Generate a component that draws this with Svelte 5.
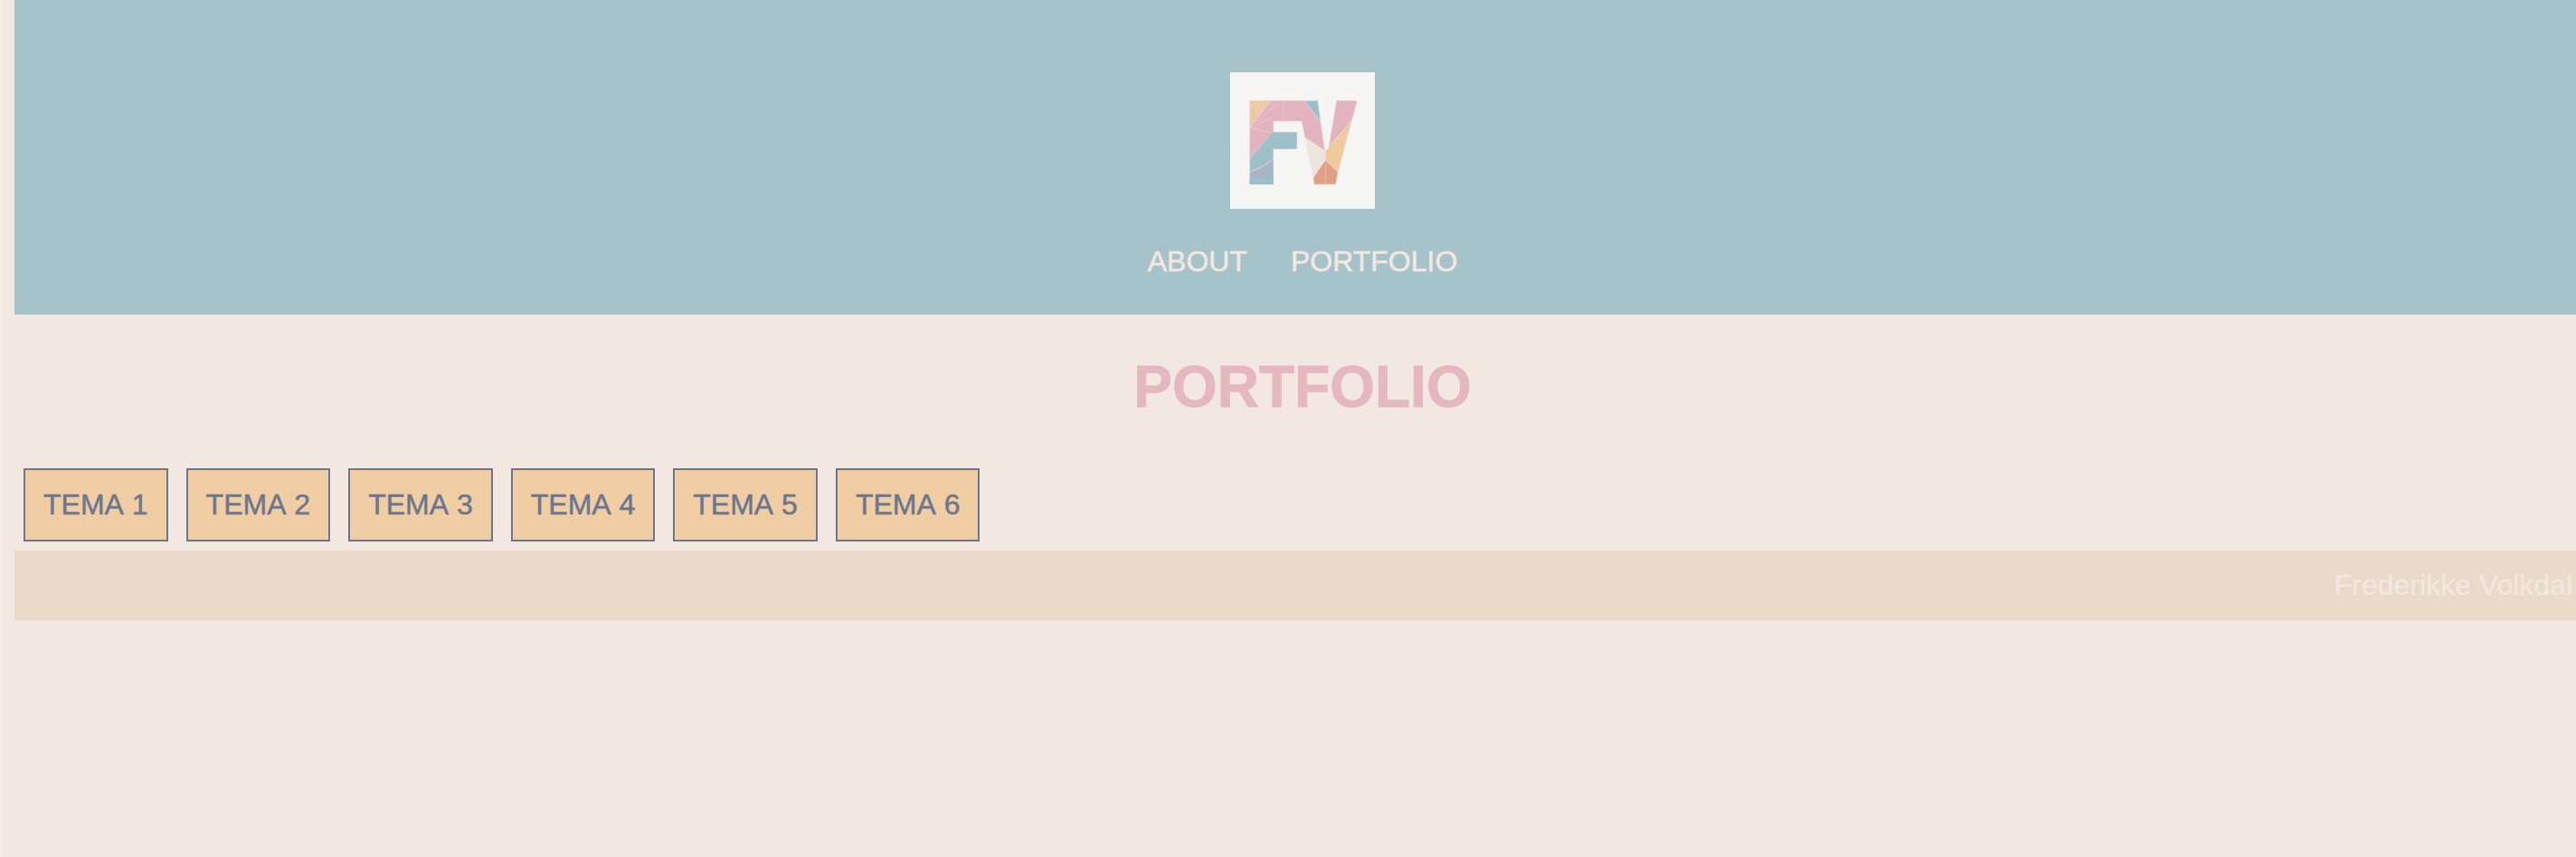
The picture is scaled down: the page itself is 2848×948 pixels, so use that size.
<script>
  const links = ['ABOUT', 'PORTFOLIO'];
  const themes = [1, 2, 3, 4, 5, 6];
</script>

<div class="page">
  <header>
    <svg class="logo" viewBox="0 0 480 453" preserveAspectRatio="none" role="img" aria-label="FV">
      <rect width="480" height="453" fill="#f5f5f3" />
      <g stroke="#eddfe2" stroke-width="1.5" stroke-linejoin="round">
        <path d="M65 94H135L65 183Z" fill="#eec8a0" />
        <path d="M135 94H246L300 163L314 260L248 216L237 162H144V200L65 288V183Z" fill="#e3b3bf" />
        <path d="M246 94H291L300 163Z" fill="#9bc0c8" />
        <path d="M144 198H222V255H144V287Q112 315 65 331V288L136 201Z" fill="#9fc0c8" />
        <path d="M144 287V372H65V331Q112 315 144 287Z" fill="#a8b5c6" />
        <path d="M248 216L314 260L316 291L276 350Z" fill="#eee4df" />
        <path d="M353 94H422L403 161L327 248Z" fill="#e3b3bf" />
        <path d="M403 161L358 332L316 291V262Z" fill="#f0c99c" />
        <path d="M316 291L358 332L350 372H279L276 350Z" fill="#df9f88" />
      </g>
      <path d="M65 351L77 347L91 351L104 344L122 349L144 339V372H65Z" fill="#9dbdc7" />
      <g fill="none" stroke="#efd8db" stroke-width="1.5">
        <path d="M65 101L98 140M77 94L107 131M65 183L136 201M65 183L135 152M87 163L170 95M178 94V162M317 292V372" />
      </g>
      <g fill="none" stroke="#c9a5b3" stroke-width="1" stroke-dasharray="2 9">
        <path d="M105 150L165 105M150 110L145 155M190 110L223 150M198 101L240 138M86 225L120 200M88 240L110 222M370 112L402 136M270 181L299 230" />
      </g>
    </svg>
    <nav>
      {#each links as link}
        <a href="#{link.toLowerCase()}">{link}</a>
      {/each}
    </nav>
  </header>

  <main>
    <h1>PORTFOLIO</h1>
    <div class="themes">
      {#each themes as theme}
        <a href="#tema{theme}">TEMA {theme}</a>
      {/each}
    </div>
  </main>

  <footer>Frederikke Volkdal</footer>
</div>

<style>
  :global(html) {
    background: #f2e7e1;
    overflow: hidden;
  }
  :global(body) {
    overflow: hidden;
  }
  .page {
    box-sizing: border-box;
    width: 2864px;
    height: 948px;
    padding-left: 14px;
    border-left: 2px solid #f6ebe5;
    font: 32px/37px "Liberation Sans", Arial, sans-serif;
    -webkit-text-stroke: 0.5px currentColor;
  }
  a {
    color: inherit;
    text-decoration: none;
  }
  header {
    box-sizing: border-box;
    height: 348px;
    padding-top: 80px;
    display: flex;
    flex-direction: column;
    align-items: center;
    background: #a7c3ca;
  }
  .logo {
    display: block;
    width: 160px;
    height: 151px;
  }
  nav {
    display: flex;
    gap: 48px;
    margin-top: 40px;
    color: #f2e7e1;
  }
  h1 {
    margin: 43px 0;
    color: #e4b8be;
    font-size: 64px;
    line-height: 74px;
    text-align: center;
    -webkit-text-stroke-width: 0.9px;
  }
  .themes {
    display: flex;
    padding: 10px;
    gap: 20px;
    font-kerning: none;
  }
  .themes a {
    padding: 20px;
    border: 2px solid #6b778e;
    background: #f0cda3;
    color: #6b778e;
  }
  footer {
    padding: 20px;
    background: #e9dac9;
    color: #f2e7e1;
    text-align: right;
  }
</style>
